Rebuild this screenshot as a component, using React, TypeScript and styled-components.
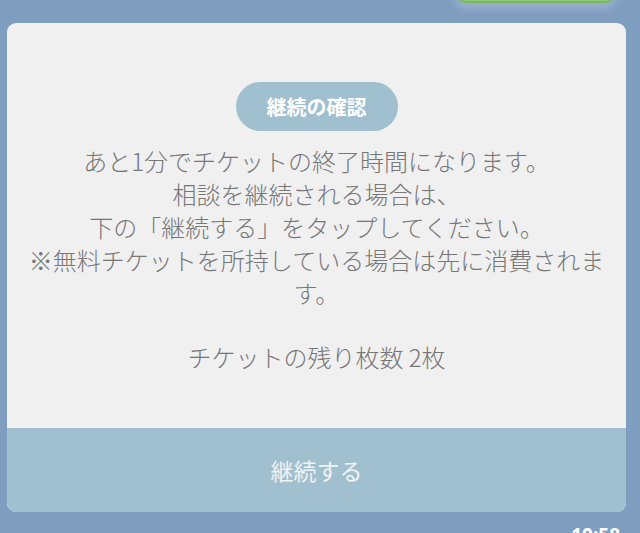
import { createGlobalStyle } from 'styled-components'
import styled from 'styled-components'

const GlobalStyle = createGlobalStyle`
    html, body {
        margin: 0;
        padding: 0;
        background: #7f9dbf;
        font-family: 'Noto Sans CJK JP', 'Noto Sans', sans-serif;
    }
`

const Page = styled.div`
    width: 640px;
    height: 533px;
    overflow: hidden;
    box-sizing: border-box;
    padding: 0 14px 0 7px;
    display: flex;
    flex-direction: column;
    background: #7f9dbf;
`

const Bubble = styled.div`
    flex-shrink: 0;
    align-self: flex-end;
    margin: -37px 9px 20px 0;
    width: 163px;
    height: 40px;
    box-sizing: border-box;
    border-radius: 12px;
    background: #92ca7c;
    border: 2px solid #7db466;
    box-shadow: 0 6px 8px rgba(200, 215, 235, 0.35);
`

const Card = styled.div`
    flex-shrink: 0;
    width: 619px;
    height: 489px;
    border-radius: 9px;
    overflow: hidden;
    background: #f0f0f0;
    display: flex;
    flex-direction: column;
`

const Body = styled.div`
    flex: 1;
    box-sizing: border-box;
    padding: 59px 15px 0 15px;
    display: flex;
    flex-direction: column;
    align-items: center;
`

const Badge = styled.div`
    height: 49px;
    padding: 0 31px;
    border-radius: 25px;
    background: #a0bfcf;
    color: #ffffff;
    font-size: 20px;
    font-weight: 700;
    display: flex;
    align-items: center;
    justify-content: center;
    margin-bottom: 13px;
`

const Message = styled.p`
    margin: 0;
    width: 100%;
    font-size: 24px;
    font-weight: 300;
    line-height: 33px;
    color: #777777;
    text-align: center;
`

const Spacer = styled.div`
    height: 31px;
`

const ContinueButton = styled.button`
    flex-shrink: 0;
    height: 84px;
    border: none;
    padding: 0;
    margin: 0;
    width: 100%;
    background: #a0bfcf;
    color: #f2f2f2;
    font-family: 'Noto Sans CJK JP', 'Noto Sans', sans-serif;
    font-size: 23px;
    font-weight: 400;
    cursor: pointer;
    display: flex;
    align-items: center;
    justify-content: center;
    padding-bottom: 0;
`

const TimeRow = styled.div`
    flex-shrink: 0;
    display: flex;
    justify-content: flex-end;
    margin-top: 11px;
    padding-right: 6px;
    color: #ffffff;
    font-family: 'Noto Sans', sans-serif;
    font-size: 19px;
    font-weight: 700;
    line-height: 24px;
`

export default function App() {
    return (
        <>
            <GlobalStyle />
            <Page>
                <Bubble />
                <Card>
                    <Body>
                        <Badge>継続の確認</Badge>
                        <Message>
                            あと1分でチケットの終了時間になります。
                            <br />
                            相談を継続される場合は、
                            <br />
                            下の「継続する」をタップしてください。
                            <br />
                            ※無料チケットを所持している場合は先に消費されます。
                        </Message>
                        <Spacer />
                        <Message>チケットの残り枚数 2枚</Message>
                    </Body>
                    <ContinueButton>継続する</ContinueButton>
                </Card>
                <TimeRow>10:58</TimeRow>
            </Page>
        </>
    )
}
